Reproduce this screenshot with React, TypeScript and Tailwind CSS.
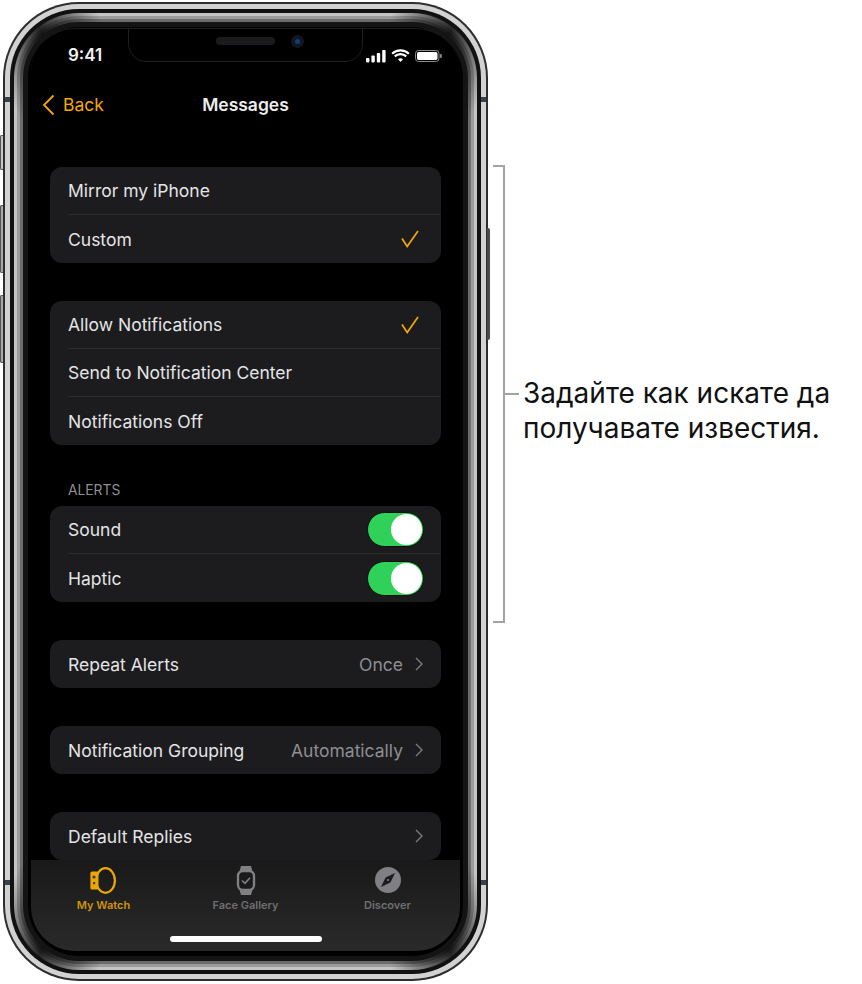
const font = "font-['Inter','Liberation_Sans',sans-serif]";

function Row({ label, value, check, chevron, toggle, last }: {
  label: string;
  value?: string;
  check?: boolean;
  chevron?: boolean;
  toggle?: boolean;
  last?: boolean;
}) {
  return (
    <div className={`flex h-12 items-center ${last ? "" : "border-b border-[#2b2b2d]"}`}>
      <span className="pt-[2px] text-[17.5px] text-[#e4e4e6]">{label}</span>
      <div className="ml-auto flex items-center">
        {value && <span className="mr-3 pt-[2px] text-[17.5px] text-[#8e8e93]">{value}</span>}
        {check && <CheckMark />}
        {chevron && <Chevron />}
        {toggle && <Toggle />}
      </div>
    </div>
  );
}

function CheckMark() {
  return (
    <svg width="18" height="18" viewBox="0 0 18 18" className="mr-[22px]" fill="none" stroke="#f5a800" strokeWidth="1.7">
      <path d="M1 8.5l5.2 8L17 1" />
    </svg>
  );
}

function Chevron() {
  return (
    <svg width="8" height="14" viewBox="0 0 8 14" className="mr-[18px]" fill="none" stroke="#7c7c80" strokeWidth="1.4">
      <path d="M1 1l6 6-6 6" />
    </svg>
  );
}

function Toggle() {
  return (
    <div className="mr-[17px] flex h-[35px] w-[57px] items-center justify-end rounded-full border border-[#0c0c0c] bg-[#30d158] pr-[1px]">
      <div className="h-[31px] w-[31px] rounded-full bg-white" />
    </div>
  );
}

function Card({ children }: { children: React.ReactNode }) {
  return <div className="mb-[38px] overflow-hidden rounded-[12px] bg-[#1c1c1e] pl-[18px]">{children}</div>;
}

function StatusIcons() {
  return (
    <svg width="77" height="14" viewBox="0 0 77 14" fill="#fff">
      <rect x="0" y="9" width="3.4" height="4.4" rx="0.8" />
      <rect x="5.4" y="6.6" width="3.4" height="6.8" rx="0.8" />
      <rect x="10.8" y="4" width="3.4" height="9.4" rx="0.8" />
      <rect x="16.2" y="1" width="3.4" height="12.4" rx="0.8" />
      <path d="M34.5 13l2.5-2.7a3.4 3.4 0 0 0-5 0z" />
      <path d="M28 6.6l1.5 1.6a7.2 7.2 0 0 1 10 0l1.5-1.6a9.4 9.4 0 0 0-13 0z" />
      <path d="M25.4 3.9l1.5 1.6a11 11 0 0 1 15.2 0l1.5-1.6a13 13 0 0 0-18.2 0z" />
      <rect x="49.5" y="1.5" width="23.5" height="11" rx="3.2" fill="none" stroke="#8a8a8a" />
      <rect x="51" y="3" width="20.5" height="8" rx="1.8" />
      <rect x="74" y="5" width="1.8" height="4" rx="0.8" fill="#8a8a8a" />
    </svg>
  );
}

function WatchSide() {
  return (
    <svg width="26" height="27" viewBox="0 0 26 27" className="ml-[-1px]">
      <ellipse cx="15.5" cy="13.5" rx="9.4" ry="12.3" fill="none" stroke="#eba705" strokeWidth="2.2" />
      <path d="M2 4.5h5.5l1 2v14l-1 2H2a1.6 1.6 0 0 1-1.6-1.6V6.1A1.6 1.6 0 0 1 2 4.5z" fill="#eba705" />
      <circle cx="4" cy="10" r="1.6" fill="#4a3505" />
      <rect x="3" y="15" width="2.2" height="2.2" rx="0.5" fill="#4a3505" />
    </svg>
  );
}

function WatchFront() {
  return (
    <svg width="20" height="31" viewBox="0 0 20 31" className="shrink-0">
      <path d="M5 1h10l1.4 5H3.6zM3.6 25h12.8L15 30H5z" fill="#808084" />
      <rect x="2" y="6" width="16" height="19" rx="5" fill="#1a1a1a" stroke="#808084" strokeWidth="2.4" />
      <path d="M6 15.5l3 2.8 5-5.6" fill="none" stroke="#808084" strokeWidth="1.7" />
    </svg>
  );
}

function Compass() {
  return (
    <svg width="26" height="26" viewBox="0 0 26 26">
      <circle cx="13" cy="13" r="13" fill="#808084" />
      <path d="M20 6L10.6 10.6 6 20l9.4-4.6z" fill="#1c1c1c" />
      <circle cx="13" cy="13" r="1.1" fill="#808084" />
    </svg>
  );
}

function Tab({ icon, label, active }: { icon: React.ReactNode; label: string; active?: boolean }) {
  return (
    <div className="flex w-[142px] flex-col items-center">
      <div className="flex h-7 items-center justify-center">{icon}</div>
      <span className={`mt-1 text-[11px] font-semibold leading-[14px] ${active ? "text-[#d0930a]" : "text-[#6f6f72]"}`}>
        {label}
      </span>
    </div>
  );
}

function Phone() {
  return (
    <div className="relative ml-[3px] mt-[2px] h-[979px] w-[485px] shrink-0">
      {/* side buttons */}
      <div className="absolute left-[-3px] top-[133px] h-[35px] w-[3px] rounded-l-[2px] border-y border-l border-[#555] bg-[#c4c4c4]" />
      <div className="absolute left-[-3px] top-[203px] h-[68px] w-[3px] rounded-l-[2px] border-y border-l border-[#555] bg-[#a8a8a8]" />
      <div className="absolute left-[-3px] top-[293px] h-[68px] w-[3px] rounded-l-[2px] border-y border-l border-[#555] bg-[#a8a8a8]" />
      <div className="absolute right-[-2px] top-[226px] h-[112px] w-[3px] rounded-r-[2px] bg-[#4a4a4a]" />

      {/* steel bands, the conic stops darken the inner ones round the corners */}
      <div className="h-full rounded-[76px] bg-[#2e2e30] p-[2px]">
        <div className="h-full rounded-[74px] bg-[#d2d2d2] p-[5px]">
          <div className="h-full rounded-[69px] bg-[#111] p-[4px]">
            <div className="h-full rounded-[65px] bg-[conic-gradient(#c4c4c4_0deg_17deg,#262626_24deg,#c4c4c4_31deg_149deg,#262626_156deg,#c4c4c4_163deg_197deg,#262626_204deg,#c4c4c4_211deg_329deg,#262626_336deg,#c4c4c4_343deg)] p-[3px]">
              <div className="h-full rounded-[62px] bg-[conic-gradient(#9c9c9c_0deg_17deg,#1c1c1c_24deg,#9c9c9c_31deg_149deg,#1c1c1c_156deg,#9c9c9c_163deg_197deg,#1c1c1c_204deg,#9c9c9c_211deg_329deg,#1c1c1c_336deg,#9c9c9c_343deg)] p-[3px]">
                <div className="h-full rounded-[59px] bg-[conic-gradient(#6c6c6c_0deg_17deg,#141414_24deg,#6c6c6c_31deg_149deg,#141414_156deg,#6c6c6c_163deg_197deg,#141414_204deg,#6c6c6c_211deg_329deg,#141414_336deg,#6c6c6c_343deg)] p-[3px]">
                  <div className="h-full rounded-[56px] bg-[#141414] p-[5px]">
                    <div className="h-full rounded-[51px] bg-black pb-[5px] pl-[3px] pr-[3px] pt-[1px]">
                      <Screen />
                    </div>
                  </div>
                </div>
              </div>
            </div>
          </div>
        </div>
      </div>

      {/* antenna lines */}
      <div className="absolute left-[2px] top-[95px] h-[5px] w-[5px] bg-[#3b3f48]" />
      <div className="absolute right-[2px] top-[95px] h-[5px] w-[5px] bg-[#3b3f48]" />
      <div className="absolute bottom-[96px] left-[2px] h-[5px] w-[5px] bg-[#3b3f48]" />
      <div className="absolute bottom-[96px] right-[2px] h-[5px] w-[5px] bg-[#3b3f48]" />
    </div>
  );
}

function Screen() {
  return (
    <div className="relative flex h-full flex-col overflow-hidden rounded-[44px] border-t border-[#1c1c1c] bg-black">
      {/* notch */}
      <div className="absolute left-[97px] top-[-2px] h-[35px] w-[235px] rounded-b-[18px] border border-[#1f1f1f] bg-black" />
      <div className="absolute left-[185px] top-[8px] h-[8px] w-[59px] rounded-full bg-[#1b1b1d]" />
      <div className="absolute left-[260px] top-[6px] flex h-[13px] w-[13px] items-center justify-center rounded-full bg-[#12161f]">
        <div className="h-[5px] w-[5px] rounded-full bg-[#123c7a]" />
      </div>

      <div className="relative flex h-[34px] items-end justify-between pl-[37px] pr-[17px]">
        <span className="mb-[-2px] text-[17px] font-semibold leading-5 text-[#f2f2f2]">9:41</span>
        <StatusIcons />
      </div>

      <div className="relative mt-[27px] flex h-[30px] items-center justify-center">
        <div className="absolute left-[11px] flex items-center text-[#f5a800]">
          <svg width="13" height="22" viewBox="0 0 13 22" fill="none" stroke="#f5a800" strokeWidth="1.8">
            <path d="M11.5 1.5L2 11l9.5 9.5" />
          </svg>
          <span className="ml-[8px] text-[17.5px]">Back</span>
        </div>
        <span className="text-[17.5px] font-semibold text-[#ececec]">Messages</span>
      </div>

      <div className="min-h-0 flex-1 overflow-hidden px-[19px] pt-[47px]">
        <Card>
          <Row label="Mirror my iPhone" />
          <Row label="Custom" check last />
        </Card>
        <Card>
          <Row label="Allow Notifications" check />
          <Row label="Send to Notification Center" />
          <Row label="Notifications Off" last />
        </Card>
        <div className="mb-2 mt-[-1px] pl-[18px] text-[13.8px] leading-4 text-[#8e8e93]">ALERTS</div>
        <Card>
          <Row label="Sound" toggle />
          <Row label="Haptic" toggle last />
        </Card>
        <Card>
          <Row label="Repeat Alerts" value="Once" chevron last />
        </Card>
        <Card>
          <Row label="Notification Grouping" value="Automatically" chevron last />
        </Card>
        <Card>
          <Row label="Default Replies" chevron last />
        </Card>
      </div>

      <div className="relative flex h-[91px] shrink-0 justify-center bg-gradient-to-b from-[#191919] to-[#2a2a2a] pt-[6px]">
        <Tab icon={<WatchSide />} label="My Watch" active />
        <Tab icon={<WatchFront />} label="Face Gallery" />
        <Tab icon={<Compass />} label="Discover" />
        <div className="absolute bottom-[9px] left-[139px] h-[6px] w-[152px] rounded-full bg-white" />
      </div>
    </div>
  );
}

export default function App() {
  return (
    <div className={`flex h-[984px] w-[862px] bg-white ${font}`}>
      <Phone />
      <div className="ml-[5px] mt-[165px] h-[458px] w-[12px] border-y-2 border-r-2 border-[#a3a3a3]" />
      <div className="mt-[376px] flex h-fit">
        <div className="mt-[17px] h-[2px] w-[14px] bg-[#a3a3a3]" />
        <p className="ml-[4px] whitespace-nowrap text-[28px] leading-[35px] text-[#111]">
          Задайте как искате да
          <br />
          получавате известия.
        </p>
      </div>
    </div>
  );
}
